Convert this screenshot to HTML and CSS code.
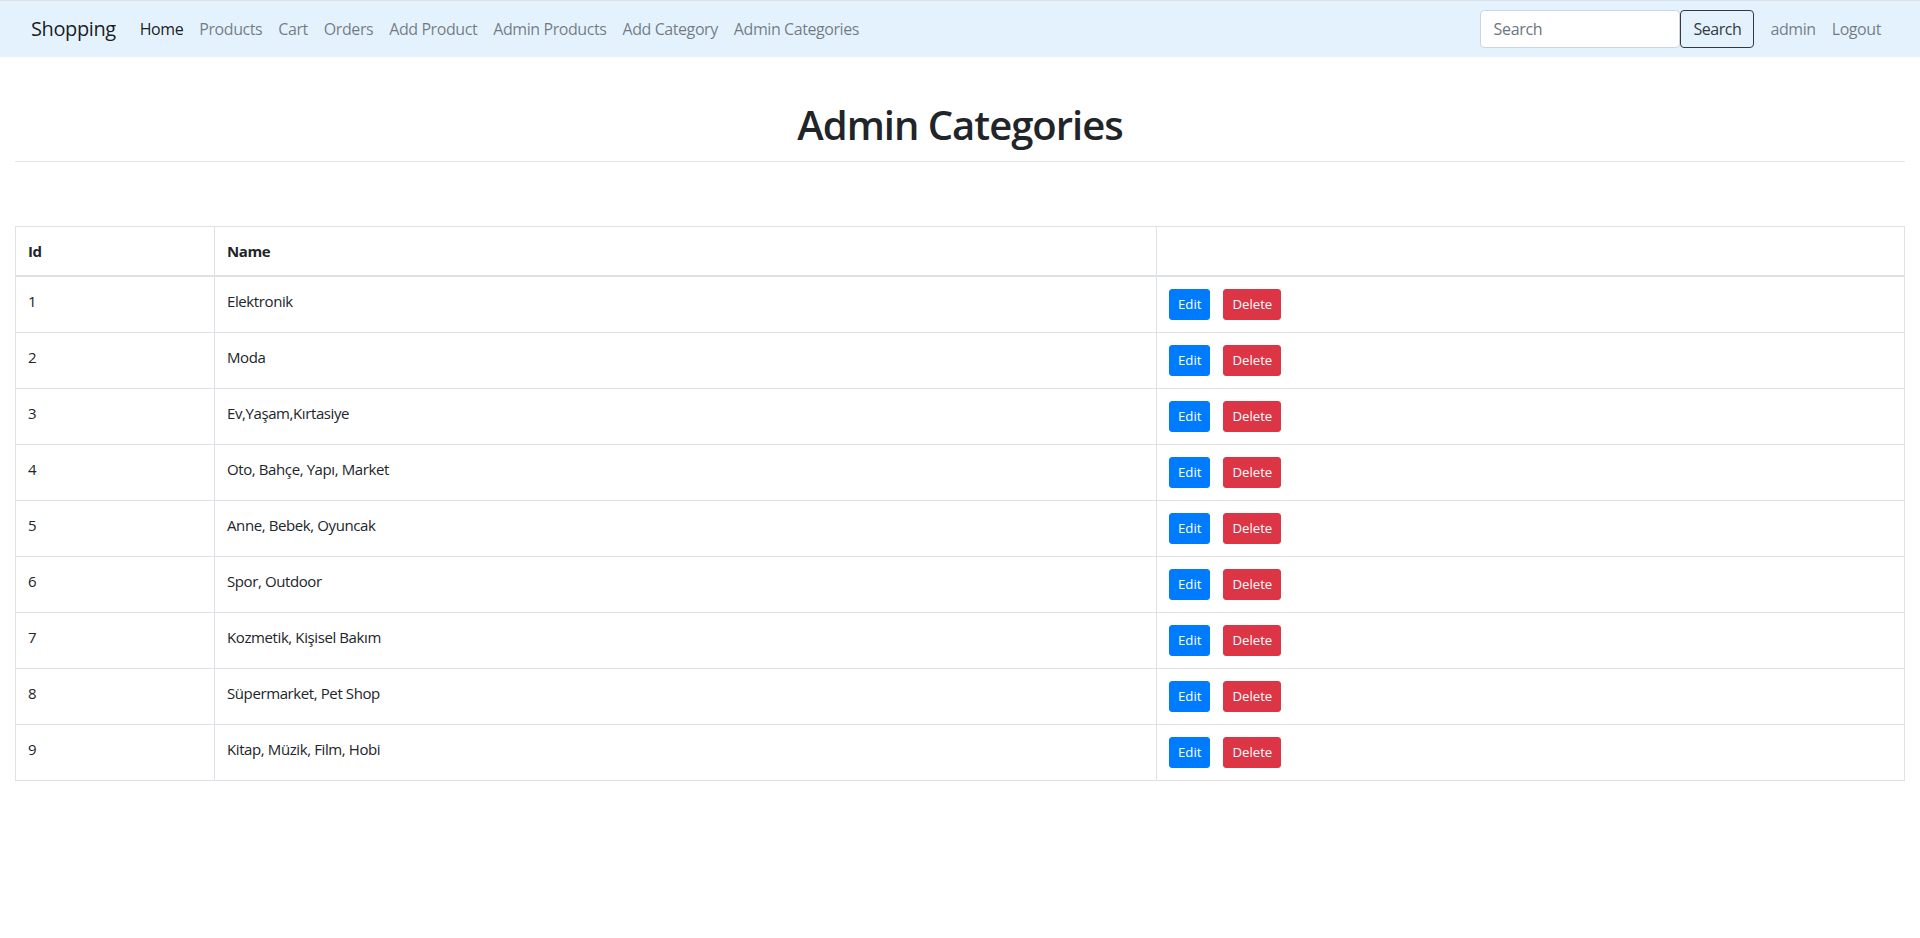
FILE: index.html
```html
<!DOCTYPE html>
<html lang="tr">
<head>
<meta charset="utf-8">
<title>Admin Categories</title>
<link rel="stylesheet" href="styles.css">
</head>
<body>
<nav class="navbar">
  <a class="brand" href="#">Shopping</a>
  <ul class="nav-links">
    <li><a class="nav-link active" href="#">Home</a></li>
    <li><a class="nav-link" href="#">Products</a></li>
    <li><a class="nav-link" href="#">Cart</a></li>
    <li><a class="nav-link" href="#">Orders</a></li>
    <li><a class="nav-link" href="#">Add Product</a></li>
    <li><a class="nav-link" href="#">Admin Products</a></li>
    <li><a class="nav-link" href="#">Add Category</a></li>
    <li><a class="nav-link" href="#">Admin Categories</a></li>
  </ul>
  <form class="search-form">
    <input class="search-input" type="text" placeholder="Search">
    <button class="search-btn" type="button">Search</button>
  </form>
  <ul class="nav-links user-links">
    <li><a class="nav-link" href="#">admin</a></li>
    <li><a class="nav-link" href="#">Logout</a></li>
  </ul>
</nav>
<main class="container">
  <h1 class="page-title">Admin Categories</h1>
  <hr class="divider">
  <table class="table">
    <thead>
      <tr><th class="col-id">Id</th><th class="col-name">Name</th><th></th></tr>
    </thead>
    <tbody>
      <tr><td>1</td><td>Elektronik</td><td><div class="actions"><a class="btn btn-edit" href="#">Edit</a><a class="btn btn-delete" href="#">Delete</a></div></td></tr>
      <tr><td>2</td><td>Moda</td><td><div class="actions"><a class="btn btn-edit" href="#">Edit</a><a class="btn btn-delete" href="#">Delete</a></div></td></tr>
      <tr><td>3</td><td>Ev,Yaşam,Kırtasiye</td><td><div class="actions"><a class="btn btn-edit" href="#">Edit</a><a class="btn btn-delete" href="#">Delete</a></div></td></tr>
      <tr><td>4</td><td>Oto, Bahçe, Yapı, Market</td><td><div class="actions"><a class="btn btn-edit" href="#">Edit</a><a class="btn btn-delete" href="#">Delete</a></div></td></tr>
      <tr><td>5</td><td>Anne, Bebek, Oyuncak</td><td><div class="actions"><a class="btn btn-edit" href="#">Edit</a><a class="btn btn-delete" href="#">Delete</a></div></td></tr>
      <tr><td>6</td><td>Spor, Outdoor</td><td><div class="actions"><a class="btn btn-edit" href="#">Edit</a><a class="btn btn-delete" href="#">Delete</a></div></td></tr>
      <tr><td>7</td><td>Kozmetik, Kişisel Bakım</td><td><div class="actions"><a class="btn btn-edit" href="#">Edit</a><a class="btn btn-delete" href="#">Delete</a></div></td></tr>
      <tr><td>8</td><td>Süpermarket, Pet Shop</td><td><div class="actions"><a class="btn btn-edit" href="#">Edit</a><a class="btn btn-delete" href="#">Delete</a></div></td></tr>
      <tr><td>9</td><td>Kitap, Müzik, Film, Hobi</td><td><div class="actions"><a class="btn btn-edit" href="#">Edit</a><a class="btn btn-delete" href="#">Delete</a></div></td></tr>
    </tbody>
  </table>
</main>
</body>
</html>
```

FILE: styles.css
```css
* { box-sizing: border-box; }

body {
  margin: 0;
  font-family: "Open Sans", "Noto Sans", "Liberation Sans", sans-serif;
  font-size: 16px;
  line-height: 24px;
  color: #212529;
  background: #fff;
}

a { text-decoration: none; }

.navbar {
  display: flex;
  align-items: center;
  height: 57px;
  padding: 0 31px;
  background: #e3f2fd;
  border-top: 1px solid #dde1e5;
}

.brand {
  font-size: 20px;
  color: rgba(0, 0, 0, 0.9);
  margin-right: 16px;
  line-height: 30px;
  letter-spacing: -0.4px;
}

.nav-links {
  display: flex;
  list-style: none;
  margin: 0;
  padding: 0;
}

.nav-link {
  display: block;
  padding: 8px;
  color: rgba(0, 0, 0, 0.5);
  letter-spacing: -0.42px;
}

.nav-link.active { color: rgba(0, 0, 0, 0.9); }

.search-form {
  display: flex;
  margin-left: auto;
  margin-right: 8px;
}

.search-input {
  width: 200px;
  height: 38px;
  padding: 6px 12px;
  font: inherit;
  font-size: 16px;
  color: #495057;
  background: #fff;
  border: 1px solid #ced4da;
  border-radius: 4px;
  letter-spacing: -0.3px;
}

.search-input::placeholder { color: #6c757d; }

.search-btn {
  height: 38px;
  padding: 6px 12px;
  font: inherit;
  font-size: 16px;
  color: #343a40;
  background: transparent;
  border: 1px solid #343a40;
  border-radius: 4px;
  letter-spacing: -0.45px;
}

.container { padding: 0 15px; }

.page-title {
  margin: 44px 0 0;
  font-size: 40px;
  line-height: 48px;
  font-weight: 600;
  text-align: center;
  letter-spacing: -1px;
}

.divider {
  margin: 12px 0 0;
  border: 0;
  border-top: 1px solid #e5e5e5;
  height: 0;
}

.table {
  width: 100%;
  margin-top: 64px;
  border-collapse: collapse;
  border: 1px solid #dee2e6;
}

.table th,
.table td {
  padding: 12px;
  border: 1px solid #dee2e6;
  text-align: left;
  vertical-align: top;
  letter-spacing: -0.4px;
}

.table th {
  font-weight: 700;
  border-bottom-width: 2px;
  font-size: 15px;
}

.table td { font-size: 15px; }

.col-id { width: 199px; }
.col-name { width: 942px; }

.actions {
  display: flex;
  gap: 13px;
}

.btn {
  display: inline-block;
  height: 31px;
  padding: 4px 8px;
  font-size: 13.2px;
  line-height: 21px;
  color: #fff;
  border: 1px solid transparent;
  border-radius: 3px;
  letter-spacing: 0;
}

.btn-edit { background: #007bff; border-color: #007bff; }
.btn-delete { background: #dc3545; border-color: #dc3545; }
```
